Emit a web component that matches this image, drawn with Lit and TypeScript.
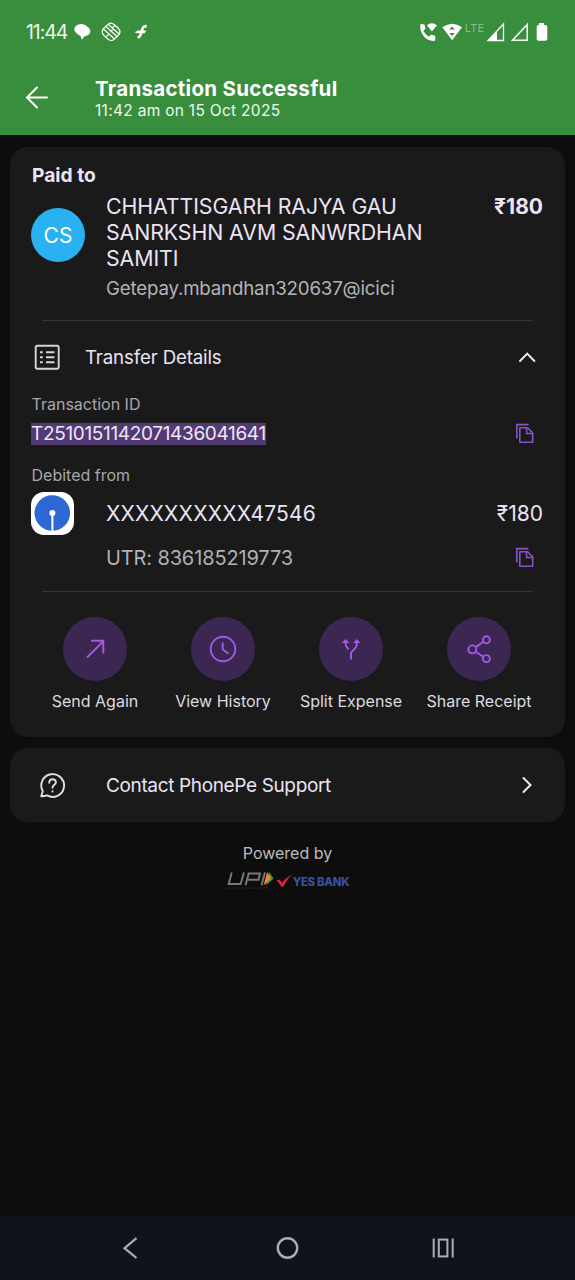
import { LitElement, html, css, svg } from "lit";
import { customElement } from "lit/decorators.js";

const copyIcon = html`<svg class="copy" width="20" height="22" viewBox="0 0 20 22" fill="none" stroke="#8a50c6" stroke-width="1.6">
  <path d="M1.8 15.5V1.6H13.5" />
  <path d="M4.8 4.7H12.5L17.7 9.9V19.2H4.8Z" stroke-linejoin="round" />
  <path d="M11.6 5V10.5H17.5" />
</svg>`;

const actions = [
  { label: "Send Again", icon: svg`<path d="M8 24.5L24 8.5M12 7.7H24.3V20.5" />` },
  { label: "View History", icon: svg`<circle cx="16" cy="16" r="12.3" /><path d="M15.7 10.3V15.7Q15.7 16.5 16.4 17L20.8 20.2" stroke-linecap="round" />` },
  {
    label: "Split Expense",
    icon: svg`<path d="M16 26.5V20.5C16 17.5 21.8 16.2 21.8 11V8M10.6 8V11C10.6 13.3 12 15 13.8 16.6" />
      <path d="M8.2 9.3L10.6 6.9L13 9.3ZM19.4 9.3L21.8 6.9L24.2 9.3Z" fill="#a259e6" stroke-width="1.2" />`,
  },
  {
    label: "Share Receipt",
    icon: svg`<circle cx="9.3" cy="16.4" r="4" /><circle cx="23.4" cy="6.8" r="3.5" /><circle cx="23.4" cy="25.6" r="3.5" />
      <path d="M12.7 14.1L20.4 8.8M12.7 18.7L20.4 23.7" />`,
  },
];

@customElement("app-root")
export class AppRoot extends LitElement {
  static styles = css`
    :host {
      display: flex;
      flex-direction: column;
      height: 1280px;
      width: 575px;
      background: #0d0d0d;
      color: #ece3f4;
      font-family: Inter, "Noto Sans", sans-serif;
      overflow: hidden;
    }
    * { box-sizing: border-box; }
    svg { display: block; flex: none; }
    span, div { white-space: nowrap; }
    .header { background: #388e3c; height: 135px; color: #fff; }
    .status { height: 64px; padding: 0 26px 0 26px; display: flex; align-items: center; justify-content: space-between; }
    .left { display: flex; align-items: center; }
    .clock { width: 48px; font-size: 19.5px; letter-spacing: -1.1px; line-height: 24px; color: #eef7ee; }
    .title-row { display: flex; padding: 13px 0 0 25px; }
    .back { margin-top: 8px; margin-right: 46px; }
    .title { font-size: 20.5px; font-weight: 700; line-height: 23px; letter-spacing: 0.3px; }
    .date { font-size: 15.5px; line-height: 22px; letter-spacing: 0.29px; color: #eff8ef; }
    .card { margin: 12px 10px 0; width: 555px; border-radius: 18px; background: #1a1a1a; }
    .main { height: 590px; padding: 16px 22px 0 21px; display: flex; flex-direction: column; flex: none; }
    .paid { font-size: 19.2px; font-weight: 700; line-height: 25px; height: 30px; padding-left: 1px; }
    .payee { display: flex; height: 127px; }
    .avatar { width: 54px; height: 54px; margin: 15px 21px 0 0; border-radius: 50%; background: #29b1f1; color: #fff; font-size: 21px; line-height: 55px; text-align: center; flex: none; }
    .info { flex: 1; }
    .name { font-size: 21.3px; line-height: 26px; letter-spacing: -0.07px; }
    .vpa { font-size: 18.7px; line-height: 30px; margin-top: 3px; color: #b5b3b6; letter-spacing: -0.18px; }
    .amount { font-size: 21px; line-height: 27px; font-weight: 700; }
    .rule { height: 1px; background: #353535; margin: 0 10px 0 11px; flex: none; }
    .details { display: flex; align-items: center; height: 71px; padding: 0 7px 0 3px; }
    .details-label { flex: 1; margin-left: 25px; padding-top: 2px; font-size: 18.7px; letter-spacing: -0.15px; }
    .small { font-size: 16px; line-height: 24px; color: #a9a6ab; padding-left: 0.5px; }
    .tid-row { display: flex; align-items: center; justify-content: space-between; height: 34px; padding: 1px 8px 0 0; }
    .tid { background: #523a72; font-size: 19px; line-height: 22px; color: #f1e5fa; letter-spacing: -0.34px; }
    .debited { margin-top: 13px; }
    .account { display: flex; align-items: center; height: 52px; padding-top: 1px; }
    .acct { flex: 1; margin-left: 32px; font-size: 21px; letter-spacing: 0.2px; }
    .acct-amount { font-size: 21px; }
    .utr-row { display: flex; align-items: center; justify-content: space-between; height: 37px; padding: 0 8px 0 75px; margin-bottom: 15px; }
    .utr { font-size: 20px; color: #b2afb5; letter-spacing: -0.13px; }
    .actions { display: grid; grid-template-columns: repeat(4, 128px); margin-top: 25px; justify-content: center; }
    .action { display: flex; flex-direction: column; align-items: center; font-size: 16px; color: #dedbe0; line-height: 26px; gap: 7px; }
    .disc { width: 64px; height: 64px; border-radius: 50%; background: #3b2751; display: grid; place-items: center; }
    .support { height: 74px; margin-top: 11px; display: flex; align-items: center; padding: 0 32px 0 29px; font-size: 19px; letter-spacing: -0.36px; }
    .support-label { flex: 1; margin-left: 40px; padding-top: 1px; }
    .powered { margin-top: 19px; display: flex; flex-direction: column; align-items: center; font-size: 16px; line-height: 24px; color: #bcbcbc; flex: 1; }
    .logos { display: flex; margin-top: 5px; }
    .yes { font-size: 11.3px; line-height: 17px; margin-top: 4px; font-weight: 800; color: #3a4fa3; letter-spacing: -0.25px; }
    .nav { height: 64px; background: #11131b; display: flex; align-items: center; padding-left: 121px; flex: none; }
    .home { margin: 0 132px 0 137px; }
  `;

  render() {
    return html`
      <div class="header">
        <div class="status">
          <div class="left">
            <span class="clock">11:44</span>
            <svg width="76" height="22" viewBox="0 0 76 22" fill="#fff">
              <ellipse cx="7.2" cy="8.3" rx="6.9" ry="5.2" />
              <path d="M4 6C6 4 16.3 4.2 16.3 10.3C16.3 13.2 14 14.7 10.5 15.2L7.9 18.7L6.4 14.8C1.5 13 1 8 4 6Z" />
              <g fill="none" stroke="#fff" stroke-width="1.2">
                <path d="M37.3 2.2Q40 3 44 7Q48 11 44 14.5L40 18.5Q37.3 20.5 34.5 18.5L30 14.5Q26.5 11 30 7L34 3.5Q35.5 2.2 37.3 2.2Z" />
                <path d="M32 5.5L43.5 16M34.5 3.5L45 13M29.5 8L35 13L32.5 15.5M35.5 13.5L40.5 18M38 7L41 4.5M36 11L39.5 8" />
              </g>
              <path d="M72.8 5.2C69 4.8 68.2 7.6 67.4 11.2C66.8 14.2 66.2 16.3 63.6 16.3" fill="none" stroke="#fff" stroke-width="2.6" />
              <path d="M60.5 11.2L64 9.6H72.3L70.6 12.2H63.4Z" />
            </svg>
          </div>
          <svg width="131" height="24" viewBox="0 0 131 24" fill="#fff">
            <path d="M2.6 4L6.4 4.6L7.5 8.8L5.3 11Q7.3 14.5 10.7 16.7L13 14.7L17.2 15.8V20.8C8 22 .5 12.5 2.6 4Z" />
            <path d="M8.8 5.3Q13.8 1 19 5.3L13.9 11.5Z" />
            <path d="M24.3 7.3Q34.2 .2 44 7.3L34.2 20.2Z" />
            <path d="M31.4 9.5L34 6.5L36.8 9.5ZM31.4 13L34 16L36.8 13Z" fill="#52795a" />
            <text x="46.8" y="11.8" font-family="Inter" font-size="11" letter-spacing=".2" fill="#8abb8d" stroke="none">LTE</text>
            <path d="M85.5 4L70 20.5H85.5Z" fill="none" stroke="#fff" stroke-width="1.3" />
            <path d="M79 11V20.5H69.5Z" />
            <path d="M109.2 4.5L94.5 20.3H109.2Z" fill="none" stroke="#fff" stroke-width="1.5" />
            <path d="M121 3H126V5H127.5Q129.3 5 129.3 7V19Q129.3 20.7 127.5 20.7H120.5Q118.7 20.7 118.7 19V7Q118.7 5 120.5 5H121Z" />
          </svg>
        </div>
        <div class="title-row">
          <svg class="back" width="24" height="24" viewBox="0 0 24 24" fill="none" stroke="#fff" stroke-width="2" stroke-linecap="round"><path d="M22 12.5H2.5M12 2.5L2 12.5L12 22.5" /></svg>
          <div><div class="title">Transaction Successful</div><div class="date">11:42 am on 15 Oct 2025</div></div>
        </div>
      </div>

      <div class="card main">
        <div class="paid">Paid to</div>
        <div class="payee">
          <div class="avatar">CS</div>
          <div class="info">
            <div class="name">CHHATTISGARH RAJYA GAU<br />SANRKSHN AVM SANWRDHAN<br />SAMITI</div>
            <div class="vpa">Getepay.mbandhan320637@icici</div>
          </div>
          <div class="amount">₹180</div>
        </div>
        <div class="rule"></div>
        <div class="details">
          <svg width="26" height="26" viewBox="0 0 26 26" fill="none" stroke="#d8d5d8" stroke-width="1.9">
            <rect x="1.7" y="1.7" width="23" height="23" rx="1.5" />
            <path d="M6 8.3H8.8M6 13.2H8.8M6 18.2H8.8M12 8.3H20.5M12 13.2H20.5M12 18.2H20.5" />
          </svg>
          <span class="details-label">Transfer Details</span>
          <svg width="18" height="12" viewBox="0 0 18 12" fill="none" stroke="#ece7f0" stroke-width="2" stroke-linecap="round"><path d="M2 10L9.2 2.6L16.4 10" /></svg>
        </div>
        <div class="small">Transaction ID</div>
        <div class="tid-row"><span class="tid">T2510151142071436041641</span>${copyIcon}</div>
        <div class="small debited">Debited from</div>
        <div class="account">
          <svg width="43" height="43" viewBox="0 0 43 43">
            <rect width="43" height="43" rx="13" fill="#fff" />
            <circle cx="21.3" cy="21" r="17.8" fill="#2e68d3" />
            <path d="M21.4 21V39.5" stroke="#fff" stroke-width="2" /><circle cx="21.4" cy="21" r="3" fill="#fff" />
          </svg>
          <span class="acct">XXXXXXXXXX47546</span>
          <span class="acct-amount">₹180</span>
        </div>
        <div class="utr-row"><span class="utr">UTR: 836185219773</span>${copyIcon}</div>
        <div class="rule"></div>
        <div class="actions">
          ${actions.map(
            (a) => html`<div class="action">
              <div class="disc"><svg width="32" height="32" viewBox="0 0 32 32" fill="none" stroke="#a259e6" stroke-width="1.9">${a.icon}</svg></div>
              <span>${a.label}</span>
            </div>`,
          )}
        </div>
      </div>

      <div class="card support">
        <svg width="27" height="27" viewBox="0 0 27 27" fill="none" stroke="#e2dfe3" stroke-width="1.9" stroke-linecap="round" stroke-linejoin="round">
          <path d="M2.2 24.3L3.8 19.2A11.4 11.4 0 1 1 8 23.4Q5.5 24.2 2.2 24.3Z" />
          <path d="M10.2 10.8C10.3 6 17 6.3 16.9 10.4C16.8 13 13.5 12.8 13.5 15.8M13.5 19.2V19.6" />
        </svg>
        <span class="support-label">Contact PhonePe Support</span>
        <svg width="12" height="18" viewBox="0 0 12 18" fill="none" stroke="#ece7f0" stroke-width="2" stroke-linecap="round"><path d="M2.5 2L9.5 9L2.5 16" /></svg>
      </div>

      <div class="powered">
        <span>Powered by</span>
        <div class="logos">
          <svg width="67" height="20" viewBox="0 0 67 20" fill="none">
            <path d="M5.7 2.5L2.7 14H14.7L17.9 2.5M19.5 15.3L22.7 3.5H34L32.5 9.8H21.5M39 2.5L35.5 15.3" stroke="#777" stroke-width="2" />
            <path d="M43.2 2L47.5 8.5L40 15.5Z" fill="#22a352" /><path d="M41.2 2L45 8.5L37.5 15.5Z" fill="#f48332" />
            <path d="M1 18H42" stroke="#2b2b2b" stroke-width="1" stroke-dasharray="2 1" />
            <path d="M50.3 10.3L53.8 9.8L56 12.8Q60 7.5 67 3.5Q60.5 9.5 57.5 16.8H55.5Q53.3 12.8 50.3 10.3Z" fill="#dc2546" />
          </svg>
          <span class="yes">YES BANK</span>
        </div>
      </div>

      <div class="nav">
        <svg width="18" height="24" viewBox="0 0 18 24" fill="none" stroke="#abaeb4" stroke-width="2.2"><path d="M15.5 2.2L3.5 12.2L15.5 22" /></svg>
        <svg class="home" width="24" height="24" viewBox="0 0 24 24" fill="none" stroke="#abaeb4" stroke-width="2.4"><circle cx="11.5" cy="12" r="9.7" /></svg>
        <svg width="24" height="24" viewBox="0 0 24 24" fill="none" stroke="#abaeb4" stroke-width="2"><path d="M1.7 2.5V21.5M20.7 2.5V21.5" /><rect x="6.8" y="3.6" width="8.6" height="16.8" /></svg>
      </div>
    `;
  }
}
